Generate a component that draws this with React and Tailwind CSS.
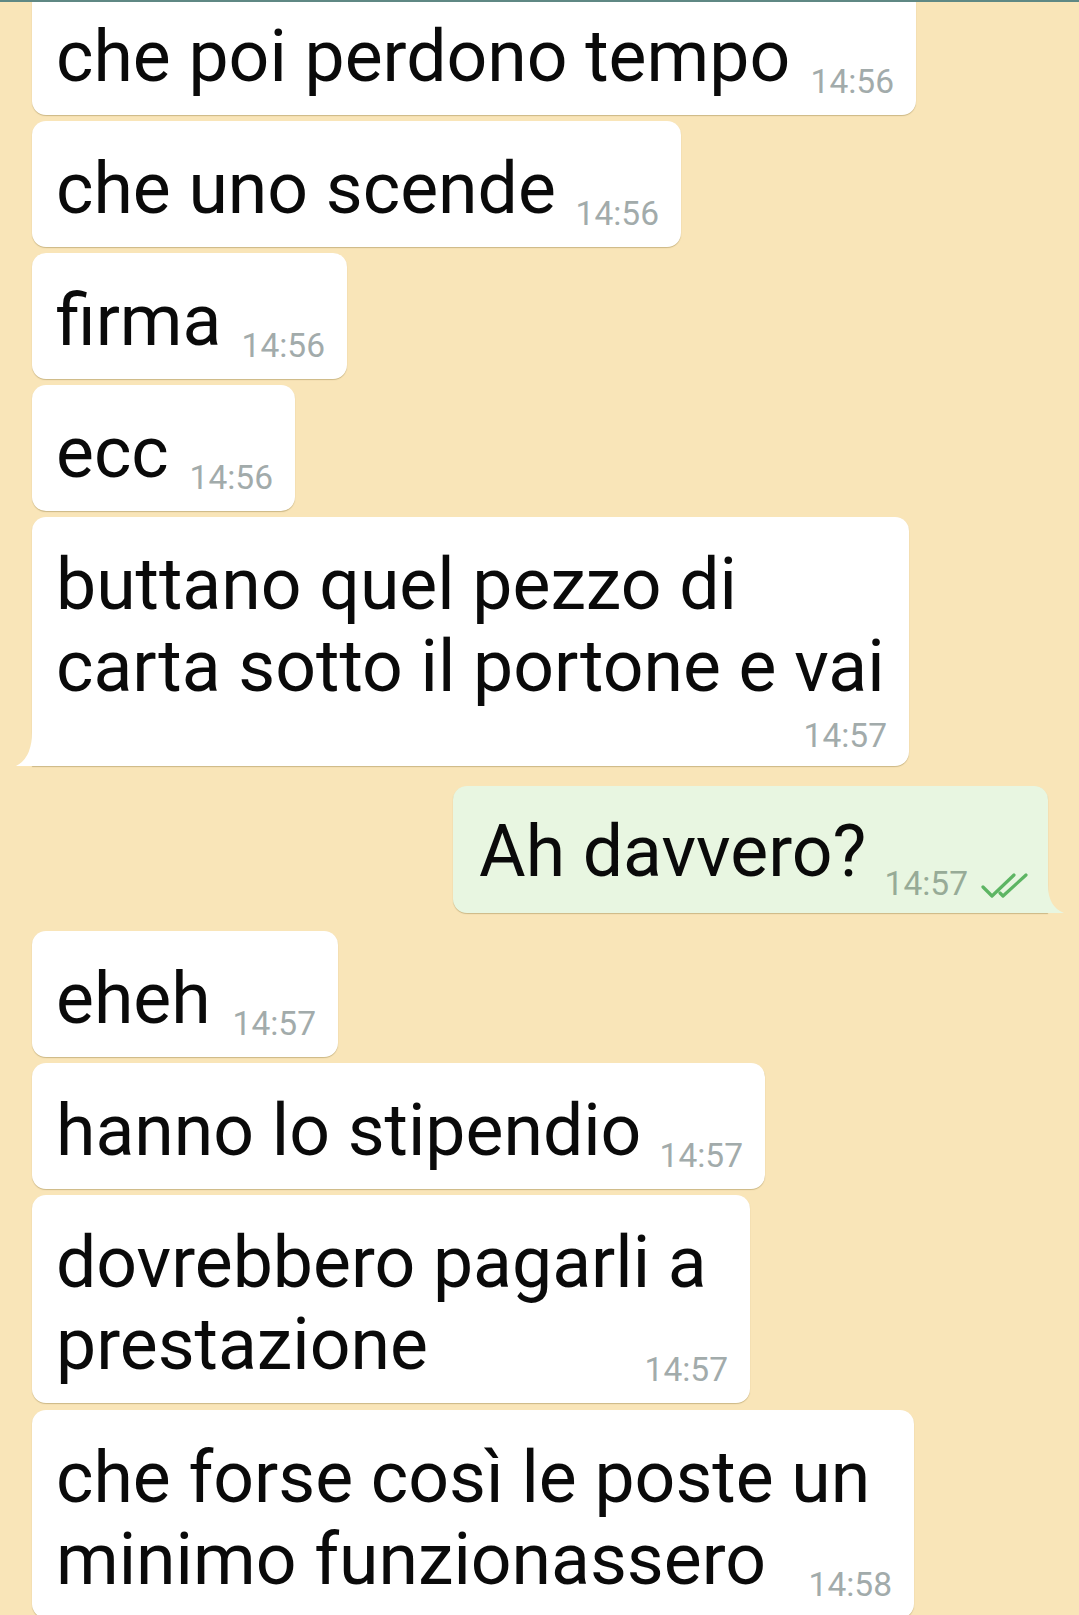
import React from 'react';

const messages = [
    { lines: ['che poi perdono tempo'], time: '14:56', w: 'w-[884px]', mt: 'mt-[-13px]' },
    { lines: ['che uno scende'], time: '14:56', w: 'w-[649px]', mt: 'mt-[6px]' },
    { lines: ['firma'], time: '14:56', w: 'w-[315px]', mt: 'mt-[6px]' },
    { lines: ['ecc'], time: '14:56', w: 'w-[263px]', mt: 'mt-[6px]' },
    {
        lines: ['buttano quel pezzo di', 'carta sotto il portone e vai'],
        time: '14:57',
        w: 'w-[877px]',
        mt: 'mt-[6px]',
        timeBelow: true,
        tail: true
    },
    { mine: true, lines: ['Ah davvero?'], time: '14:57', mt: 'mt-[20px]' },
    { lines: ['eheh'], time: '14:57', w: 'w-[306px]', mt: 'mt-[18px]' },
    { lines: ['hanno lo stipendio'], time: '14:57', w: 'w-[733px]', mt: 'mt-[6px]' },
    { lines: ['dovrebbero pagarli a', 'prestazione'], time: '14:57', w: 'w-[718px]', mt: 'mt-[6px]' },
    { lines: ['che forse così le poste un', 'minimo funzionassero'], time: '14:58', w: 'w-[882px]', mt: 'mt-[7px]' }
];

function DoubleTick() {
    return (
        <svg width="48" height="26" viewBox="0 0 48 26" className="ml-[13px] mb-[1px]">
            <path d="M2 14 L11 23 L33 2" fill="none" stroke="#5db563" strokeWidth="3.2" strokeLinecap="round" strokeLinejoin="round" />
            <path d="M19 20 L22 23 L45 2" fill="none" stroke="#5db563" strokeWidth="3.2" strokeLinecap="round" strokeLinejoin="round" />
        </svg>
    );
}

function Bubble({ m }) {
    const rest = m.lines.slice(0, -1);
    const last = m.lines[m.lines.length - 1];

    if (m.timeBelow) {
        return (
            <div className={`relative ml-[32px] bg-white rounded-[14px] rounded-bl-none shadow-[0_1px_1px_rgba(120,100,40,0.35)] pt-[27px] pb-[14px] pl-[24px] pr-[22px] ${m.w} ${m.mt}`}>
                {m.lines.map((l, i) => (
                    <div key={i} className="text-[71.5px] leading-[82px] whitespace-nowrap">{l}</div>
                ))}
                <div className="flex justify-end mt-[12px] text-[33.5px] leading-[32px] text-[#a2abab]">{m.time}</div>
                {m.tail && (
                    <svg width="17" height="34" viewBox="0 0 17 34" className="absolute left-[-16px] bottom-0">
                        <path d="M17 0 L16 0 Q16 26 0 34 L17 34 Z" fill="#ffffff" />
                    </svg>
                )}
            </div>
        );
    }

    return (
        <div className={`relative ml-[32px] bg-white rounded-[14px] shadow-[0_1px_1px_rgba(120,100,40,0.35)] pt-[27px] pb-[17px] pl-[24px] pr-[22px] ${m.w} ${m.mt}`}>
            {rest.map((l, i) => (
                <div key={i} className="text-[71.5px] leading-[82px] whitespace-nowrap">{l}</div>
            ))}
            <div className="flex items-end">
                <span className="text-[71.5px] leading-[82px] whitespace-nowrap">{last}</span>
                <span className="ml-auto pl-[16px] text-[33.5px] leading-[32px] text-[#a2abab]">{m.time}</span>
            </div>
        </div>
    );
}

function MyBubble({ m }) {
    return (
        <div className={`relative ml-auto mr-[31px] w-[595px] bg-[#e8f6e1] rounded-[14px] rounded-br-none shadow-[0_1px_1px_rgba(120,100,40,0.35)] pt-[25px] pb-[20px] pl-[26px] pr-[19px] ${m.mt}`}>
            <div className="flex items-end">
                <span className="text-[71.5px] leading-[82px] whitespace-nowrap">{m.lines[0]}</span>
                <div className="ml-auto flex items-end mb-[-7px]">
                    <span className="text-[33.5px] leading-[32px] text-[#97ab97]">{m.time}</span>
                    <DoubleTick />
                </div>
            </div>
            <svg width="17" height="28" viewBox="0 0 17 28" className="absolute right-[-16px] bottom-0">
                <path d="M0 0 L1 0 Q1 22 17 28 L0 28 Z" fill="#e8f6e1" />
            </svg>
        </div>
    );
}

export default function App() {
    return (
        <div className="relative w-[1079px] h-[1615px] overflow-hidden bg-[#f9e5b8] text-[#0a0a0a] font-['Roboto','Liberation_Sans',sans-serif]">
            <div className="relative z-10 h-[2px] bg-[#5f8884]" />
            <div className="flex flex-col">
                {messages.map((m, i) =>
                    m.mine ? <MyBubble key={i} m={m} /> : <Bubble key={i} m={m} />
                )}
            </div>
        </div>
    );
}
